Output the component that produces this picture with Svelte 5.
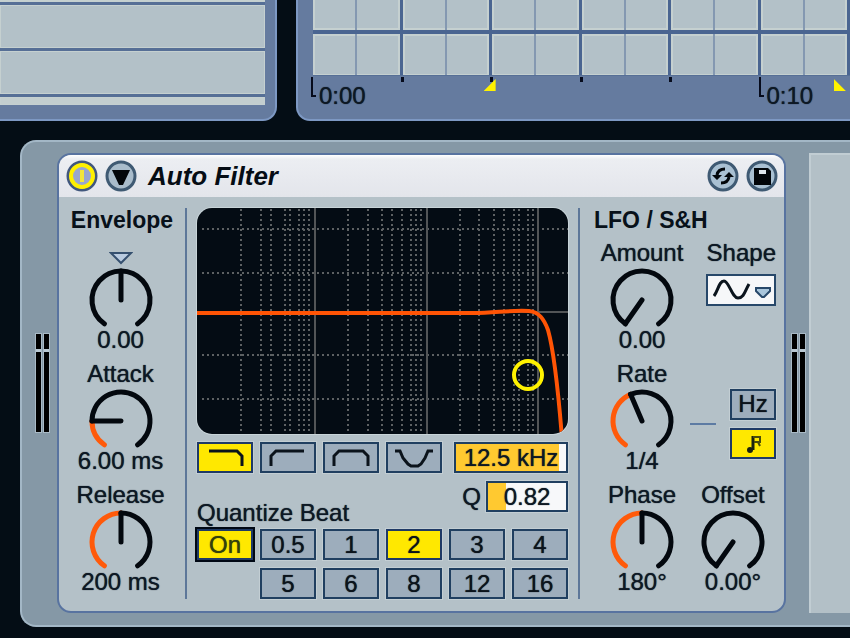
<script>
  const SWEEP = 145; // degrees each side of twelve o'clock
  const R = 29;

  let knobs = $state({
    envelope: { label: "Envelope amount", pos: 50, text: "0.00", bipolar: true },
    attack: { label: "Attack", pos: 19, text: "6.00 ms" },
    release: { label: "Release", pos: 50, text: "200 ms" },
    amount: { label: "Amount", pos: 0, text: "0.00" },
    rate: { label: "Rate", pos: 42, text: "1/4" },
    phase: { label: "Phase", pos: 50, text: "180°" },
    offset: { label: "Offset", pos: 0, text: "0.00°" },
  });

  let filter = $state("Lowpass");
  let beat = $state("2");
  let quantize = $state(true);
  let synced = $state(true);
  let enabled = $state(true);
  let shape = $state("Sine");
  let freq = $state("12.5 kHz");
  let q = $state("0.82");

  const filters = [
    { name: "Lowpass", d: "M10 7H38L43 12V22" },
    { name: "Highpass", d: "M9 22V12L14 7H42" },
    { name: "Bandpass", d: "M9 22V12L14 7H38L43 12V22" },
    { name: "Notch", d: "M7 7H12L15 14L20 20L23 22H30L33 20L37 14L40 7H45" },
  ];

  const beats = ["0.5", "1", "2", "3", "4", "5", "6", "8", "12", "16"];

  // log-spaced frequency lines
  const minor = [
    44, 64, 74, 88, 93, 102, 107, 112, 151, 171, 185, 195, 205, 214, 219, 224,
    263, 282, 297, 307, 317, 322, 331, 336,
  ];
  const decades = [118, 230, 341];
  const levels = [21, 65, 147, 191];

  const ruler = ["0:00", "", "", "", "", "0:10"];

  function point(deg) {
    const a = (deg * Math.PI) / 180;
    return `${(35 + R * Math.sin(a)).toFixed(2)} ${(35 - R * Math.cos(a)).toFixed(2)}`;
  }

  function arc(from, to) {
    return `M${point(from)}A${R} ${R} 0 ${to - from > 180 ? 1 : 0} 1 ${point(to)}`;
  }

  function angle(pos) {
    return -SWEEP + (pos / 100) * SWEEP * 2;
  }
</script>

{#snippet knob(id)}
  {@const k = knobs[id]}
  {@const deg = angle(k.pos)}
  <div class="control">
    {#if k.bipolar}
      <button class="center-mark" aria-label="Reset envelope amount" onclick={() => (k.pos = 50)}>
        <svg width="24" height="14" viewBox="0 0 24 14">
          <path d="M2 2H22L12 12Z" />
        </svg>
      </button>
    {:else}
      <label for={id}>{k.label}</label>
    {/if}
    <div class="dial">
      <svg width="70" height="63" viewBox="0 0 70 63">
        {#if !k.bipolar && k.pos > 0}
          <path class="ring lit" d={arc(-SWEEP, deg)} />
        {/if}
        <path class="ring" d={arc(k.bipolar ? -SWEEP : deg, SWEEP)} />
        <path class="ring" d="M35 35L{point(deg)}" />
      </svg>
      <input {id} type="range" min="0" max="100" aria-label={k.label} bind:value={k.pos} />
    </div>
    <output for={id}>{k.text}</output>
  </div>
{/snippet}

{#snippet meter()}
  <div class="meter"><i></i><i></i></div>
{/snippet}

<main>
  <div class="top">
    <section class="pane browser">
      <div class="rows">
        <div class="row first"></div>
        <div class="row"></div>
        <div class="row"></div>
        <div class="row last"></div>
      </div>
    </section>

    <section class="pane arrangement">
      <div class="grid">
        {#each ruler as _}
          <div class="bar"></div>
        {/each}
      </div>
      <div class="ruler">
        {#each ruler as time}
          <div class="mark" class:named={time}>
            <i></i>{#if time}<span>{time}</span>{/if}
          </div>
        {/each}
        <b class="loop start"></b>
        <b class="loop end"></b>
      </div>
    </section>
  </div>

  <div class="rack">
    <div class="side left">{@render meter()}</div>

    <article class="device">
      <header>
        <button class="round" aria-label="Device on" aria-pressed={enabled} onclick={() => (enabled = !enabled)}>
          <svg width="32" height="32" viewBox="0 0 32 32">
            <circle cx="16" cy="16" r="14" fill="#98a6cf" stroke="#41577d" stroke-width="3" />
            <circle cx="16" cy="16" r="11" fill="none" stroke={enabled ? "#fff000" : "#8a99a8"} stroke-width="4" />
            <path d="M16 10V22" stroke={enabled ? "#f2e63a" : "#5a6878"} stroke-width="4" />
          </svg>
        </button>
        <button class="round" aria-label="Fold device">
          <svg width="32" height="32" viewBox="0 0 32 32">
            <circle cx="16" cy="16" r="14" fill="#a9bccb" stroke="#3f5a73" stroke-width="3" />
            <path d="M7 10H25L18 25H14Z" fill="#02060a" />
          </svg>
        </button>
        <h1>Auto Filter</h1>
        <button class="round" aria-label="Hot-swap presets">
          <svg width="32" height="32" viewBox="0 0 32 32">
            <circle cx="16" cy="16" r="14" fill="#a9c0d2" stroke="#3f5a73" stroke-width="3" />
            <path d="M18 9Q11 9 10 15M14 23Q21 23 22 17" fill="none" stroke="#02060a" stroke-width="3" />
            <path d="M5 15H15L10 20ZM17 17H27L22 12Z" fill="#02060a" />
          </svg>
        </button>
        <button class="round" aria-label="Save preset">
          <svg width="32" height="32" viewBox="0 0 32 32">
            <circle cx="16" cy="16" r="14" fill="#a9c0d2" stroke="#3f5a73" stroke-width="3" />
            <path d="M8 8H22L25 11V25H8Z" fill="#02060a" />
            <path d="M13 10H20V14H13Z" fill="#dfe7ee" />
          </svg>
        </button>
      </header>

      <div class="body">
        <section class="envelope">
          <h2>Envelope</h2>
          <div class="stack">
            {@render knob("envelope")}
            {@render knob("attack")}
            {@render knob("release")}
          </div>
        </section>

        <section class="center">
          <svg class="graph" viewBox="0 0 371 226" role="img" aria-label="Filter response">
            <rect width="371" height="226" fill="#040c14" />
            <g class="dots">
              {#each minor as x}
                <path d="M{x} 1V226" />
              {/each}
              {#each levels as y}
                <path d="M5 {y}H371" />
              {/each}
            </g>
            <g class="solid">
              {#each decades as x}
                <path d="M{x} 0V226" />
              {/each}
              <path d="M0 104H371" />
            </g>
            <path class="curve" d="M0 105H275C300 105 310 102 332 103C342 104 347 111 351 122C357 143 361 180 365 230" />
            <circle cx="331" cy="167" r="14" fill="none" stroke="#fff200" stroke-width="4" />
          </svg>

          <div class="filters">
            {#each filters as f}
              <button class="key" aria-label={f.name} aria-pressed={filter === f.name} onclick={() => (filter = f.name)}>
                <svg width="52" height="27" viewBox="0 0 52 27"><path d={f.d} /></svg>
              </button>
            {/each}
            <input class="value freq" aria-label="Frequency" style="--fill: 94%" bind:value={freq} />
          </div>

          <div class="middle">
            <span class="caption" id="quantize">Quantize Beat</span>
            <div class="q">
              <label for="q">Q</label>
              <input class="value" id="q" style="--fill: 23%" bind:value={q} />
            </div>
          </div>

          <div class="beats" role="group" aria-labelledby="quantize">
            <button class="key on" aria-pressed={quantize} onclick={() => (quantize = !quantize)}>On</button>
            {#each beats as b}
              <button class="key" class:wrap={b === "5"} aria-pressed={beat === b} onclick={() => (beat = b)}>{b}</button>
            {/each}
          </div>
        </section>

        <section class="lfo">
          <h2>LFO / S&amp;H</h2>
          <div class="pairs">
            {@render knob("amount")}
            <div class="shape">
              <label for="shape">Shape</label>
              <div class="picker">
                <svg width="66" height="28" viewBox="0 0 66 28">
                  <path d="M6 20C10 15 11 5 16 5S24 22 30 22S37 15 41 8" fill="none" stroke="#0b141d" stroke-width="3" />
                  <path d="M48 12H62V15L56 21H54L48 15Z" fill="#a9c6dc" stroke="#27486a" stroke-width="2" />
                </svg>
                <select id="shape" bind:value={shape}>
                  <option>Sine</option>
                  <option>Square</option>
                  <option>Triangle</option>
                  <option>Random</option>
                </select>
              </div>
            </div>

            {@render knob("rate")}
            <div class="sync">
              <hr />
              <div class="modes">
                <button class="key" aria-pressed={!synced} onclick={() => (synced = false)}>Hz</button>
                <button class="key" aria-label="Sync to beat" aria-pressed={synced} onclick={() => (synced = true)}>
                  <svg class="note" width="42" height="27" viewBox="0 0 42 27">
                    <ellipse cx="18" cy="20" rx="3" ry="3" />
                    <path d="M21 20V6" />
                    <path class="flag" d="M21 7H28V12H22M26 12L28 16" />
                  </svg>
                </button>
              </div>
            </div>

            {@render knob("phase")}
            {@render knob("offset")}
          </div>
        </section>
      </div>
    </article>

    <div class="side right">{@render meter()}</div>
    <div class="drop"></div>
  </div>
</main>

<style>
  :global(body) {
    background: #040d15;
  }

  main {
    display: flex;
    flex-direction: column;
    gap: 19px;
    overflow: hidden;
    padding-bottom: 12px;
    font: 24px/24px "Liberation Sans", Arial, sans-serif;
    color: #0d1824;
    text-shadow: 0 0 1px currentColor;
  }

  button,
  input,
  select {
    font: inherit;
    color: inherit;
    text-shadow: inherit;
    box-sizing: border-box;
    margin: 0;
    padding: 0;
  }

  button {
    cursor: pointer;
  }

  svg {
    display: block;
  }

  h1,
  h2 {
    margin: 0;
  }

  /* upper panes */
  .top {
    display: flex;
    gap: 19px;
  }

  .pane {
    box-sizing: border-box;
    background: #657b9f;
    border: 2px solid #7d98c3;
    border-top: 0;
  }

  .browser {
    width: 277px;
    padding: 0 10px 14px 0;
    border-left: 0;
    border-bottom-right-radius: 14px;
  }

  .row {
    height: 43px;
    background: #b3c1c8;
    border-bottom: 3px solid #566f96;
    box-shadow: inset 0 0 0 1px #c5d0d0;
  }

  .row.first {
    height: 2px;
  }

  .row.last {
    height: 8px;
    border: 0;
    background: #c3cecf;
  }

  .arrangement {
    flex: 1;
    padding-left: 15px;
    border-right: 0;
    border-bottom-left-radius: 14px;
  }

  .grid,
  .ruler {
    display: grid;
    grid-template-columns: repeat(6, 1fr);
  }

  .grid {
    background: #b3c1c8;
    border-bottom: 1px solid #566f96;
  }

  .bar {
    height: 75px;
    border-right: 3px solid #4a6591;
    background:
      linear-gradient(#4a6591, #4a6591) 0 30px / 100% 4px no-repeat,
      linear-gradient(#8498b1, #8498b1) 50% 0 / 2px 100% no-repeat,
      linear-gradient(#c5d0d0, #c5d0d0) 0 28px / 100% 8px no-repeat,
      linear-gradient(#c5d0d0, #c5d0d0) 0 100% / 100% 1px no-repeat,
      linear-gradient(#c5d0d0, #c5d0d0) 0 0 / 2px 100% no-repeat,
      linear-gradient(#c5d0d0, #c5d0d0) 100% 0 / 2px 100% no-repeat;
  }

  .ruler {
    position: relative;
    height: 43px;
  }

  .mark {
    display: flex;
    gap: 3px;
    margin-left: -2px;
  }

  .mark i {
    width: 3px;
    height: 5px;
    margin-top: 1px;
    background: #060b1c;
  }

  .mark.named i {
    box-sizing: border-box;
    width: 5px;
    height: 20px;
    background: none;
    border: solid #060b1c;
    border-width: 0 0 2px 2px;
  }

  .mark span {
    margin-top: 8px;
  }

  .loop {
    position: absolute;
    top: 3px;
    width: 12px;
    height: 12px;
    background: #fff200;
  }

  .loop.start {
    right: 66%;
    clip-path: polygon(100% 0, 100% 100%, 0 100%);
  }

  .loop.end {
    left: 97%;
    clip-path: polygon(0 0, 100% 100%, 0 100%);
  }

  /* device rack */
  .rack {
    display: flex;
    margin-left: 20px;
    padding: 11px 0 12px;
    background: #8598a6;
    border: 2px solid #a3b7c6;
    border-right: 0;
    border-radius: 16px 0 0 16px;
  }

  .side {
    display: flex;
    align-items: center;
    justify-content: center;
    box-sizing: border-box;
    width: 23px;
  }

  .side.left {
    width: 35px;
    padding-left: 6px;
  }

  .side.right {
    padding-left: 2px;
  }

  .meter {
    display: flex;
    gap: 3px;
    padding: 1px;
  }

  .meter i {
    width: 5px;
    height: 98px;
    background: linear-gradient(#000 15px, #b9c8d2 15px, #b9c8d2 18px, #000 18px);
    box-shadow: 0 0 0 1px #a9bac6;
  }

  .drop {
    flex: 1;
    background: #b3c0c7;
    border: solid #c1cdd3;
    border-width: 2px 0 0 2px;
  }

  .device {
    overflow: hidden;
    background: #b4c1c8;
    border: 2px solid #5873a0;
    border-radius: 14px;
  }

  header {
    display: flex;
    align-items: center;
    gap: 7px;
    height: 42px;
    padding: 0 6px 0 7px;
    background: linear-gradient(#fff, #eceef2 4px, #e3e5eb);
  }

  .round {
    width: 32px;
    height: 32px;
    background: none;
    border: 0;
    border-radius: 50%;
  }

  h1 {
    flex: 1;
    padding-left: 4px;
    font-size: 26px;
    font-style: italic;
    color: #050c14;
    text-shadow: none;
  }

  h2 {
    font-size: 23px;
    line-height: 24px;
    color: #08111a;
    text-shadow: none;
  }

  .body {
    display: flex;
    padding: 11px 0 12px;
  }

  .envelope {
    display: flex;
    flex-direction: column;
    align-items: center;
    gap: 9px;
    width: 126px;
    border-right: 2px solid #5d7799;
  }

  .stack {
    display: flex;
    flex-direction: column;
    gap: 10px;
    padding-right: 3px;
  }

  .control {
    display: flex;
    flex-direction: column;
    align-items: center;
    white-space: nowrap;
  }

  .center-mark {
    display: flex;
    align-items: flex-end;
    height: 24px;
    background: none;
    border: 0;
  }

  .center-mark path {
    fill: #b9cbe0;
    stroke: #35506f;
    stroke-width: 2;
  }

  .dial {
    position: relative;
  }

  .dial input {
    position: absolute;
    inset: 0;
    width: 100%;
    height: 100%;
    opacity: 0;
    cursor: pointer;
  }

  .ring {
    fill: none;
    stroke: #03080e;
    stroke-width: 5;
    stroke-linecap: round;
  }

  .ring.lit {
    stroke: #ff5a0a;
  }

  .center {
    display: flex;
    flex-direction: column;
    gap: 8px;
    width: 371px;
    padding: 0 10px;
    border-right: 2px solid #5d7799;
  }

  .graph {
    width: 100%;
    border-radius: 15px;
    box-shadow: 0 0 0 1px #c8d4d8;
  }

  .dots path,
  .solid path {
    fill: none;
    stroke: #5d6163;
    stroke-width: 2;
  }

  .dots path {
    stroke-dasharray: 2 3;
  }

  .solid path {
    stroke: #525557;
  }

  .curve {
    fill: none;
    stroke: #ff5405;
    stroke-width: 4;
  }

  .key {
    display: flex;
    align-items: center;
    justify-content: center;
    height: 31px;
    background: #9dadbc;
    border: 2px solid #203f60;
    box-shadow: 0 0 0 1px #c3ced3;
    color: #0b131b;
  }

  .key[aria-pressed="true"] {
    background: #ffe800;
    border-color: #1f3a66;
  }

  .key path {
    fill: none;
    stroke: #0b131b;
    stroke-width: 3;
  }

  .key.on {
    color: #33400c;
    box-shadow: 0 0 0 2px #000814;
  }

  .filters {
    display: flex;
    gap: 7px;
  }

  .filters .key {
    width: 56px;
  }

  .value {
    width: 82px;
    height: 31px;
    border: 2px solid #203f60;
    border-radius: 0;
    box-shadow: 0 0 0 1px #c3ced3;
    text-align: center;
    background: linear-gradient(90deg, #ffc930 var(--fill), #f7f8fa var(--fill));
  }

  .value.freq {
    flex: 1;
    min-width: 0;
    margin-left: 5px;
  }

  .middle {
    display: flex;
    justify-content: space-between;
    height: 44px;
    margin-bottom: -4px;
  }

  .caption {
    align-self: flex-end;
  }

  .q {
    display: flex;
    align-items: center;
    align-self: flex-start;
    gap: 5px;
  }

  .beats {
    display: grid;
    grid-template-columns: repeat(6, 1fr);
    gap: 8px 7px;
  }

  .beats .wrap {
    grid-column: 2;
  }

  .lfo {
    display: flex;
    flex-direction: column;
    gap: 9px;
    padding: 0 8px 0 14px;
  }

  .pairs {
    display: grid;
    grid-template-columns: 96px 86px;
    row-gap: 10px;
  }

  .shape {
    display: flex;
    flex-direction: column;
    align-items: flex-end;
    gap: 9px;
  }

  .picker {
    position: relative;
    background: #f6f7f9;
    border: 2px solid #27486a;
  }

  .picker select {
    position: absolute;
    inset: 0;
    width: 100%;
    opacity: 0;
    cursor: pointer;
  }

  .sync {
    display: flex;
    align-items: center;
    justify-content: space-between;
    padding-top: 12px;
  }

  .sync hr {
    width: 26px;
    margin: 0;
    border: 0;
    border-top: 2px solid #5d7ba3;
  }

  .modes {
    display: flex;
    flex-direction: column;
    gap: 8px;
  }

  .modes .key {
    width: 46px;
  }

  .note ellipse {
    fill: #1b2210;
  }

  .note path {
    stroke: #1b2210;
    stroke-width: 3;
  }

  .note .flag {
    stroke: #4a4c0a;
    stroke-width: 2;
  }
</style>
